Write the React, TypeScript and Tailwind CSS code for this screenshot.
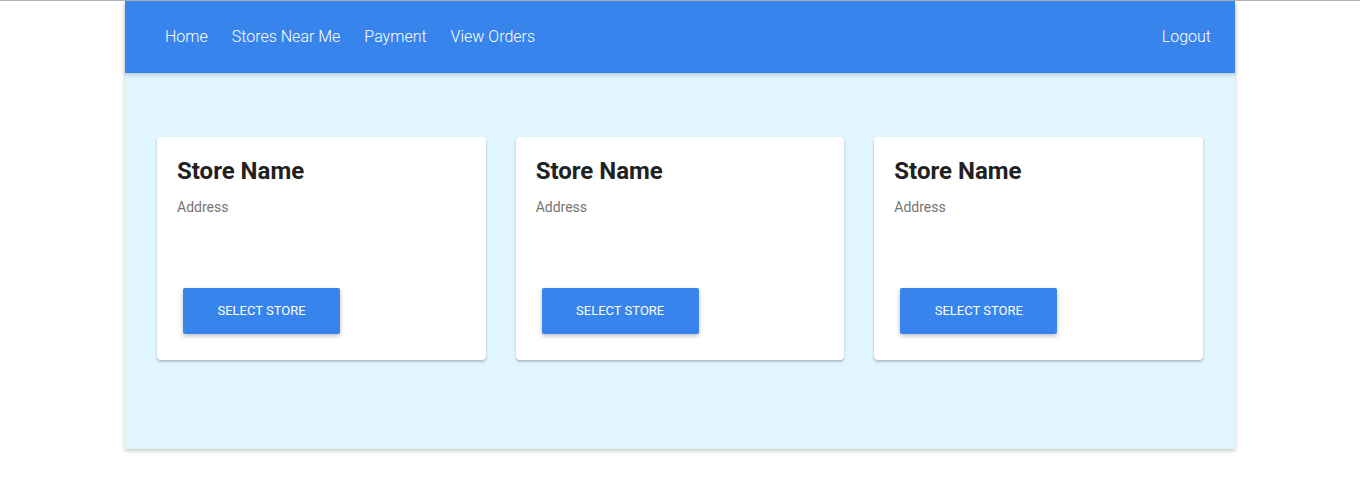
const links = ["Home", "Stores Near Me", "Payment", "View Orders"];

function StoreCard() {
  return (
    <div className="bg-white rounded-[4px] p-5 shadow-[0_2px_3px_rgba(0,0,0,0.16),0_1px_2px_rgba(0,0,0,0.12)]">
      <h2 className="text-[24px] leading-7 font-bold text-[#212121]">Store Name</h2>
      <p className="mt-3 text-[14px] leading-5 text-[#757575]">Address</p>
      <button
        type="button"
        className="mt-[71px] mb-[6px] ml-[6px] h-[46px] w-[157px] rounded-[2px] bg-[#3884ed] text-white text-[13px] font-normal uppercase shadow-[0_2px_4px_rgba(0,0,0,0.25)]"
      >
        Select Store
      </button>
    </div>
  );
}

export default function App() {
  return (
    <div className="min-h-[499px] bg-white border-t border-[#b3b3b3]" style={{ fontFamily: "Roboto, 'Liberation Sans', sans-serif" }}>
      <div className="w-[1110px] mx-auto shadow-[0_2px_4px_rgba(0,0,0,0.22)]">
        <nav className="h-[72px] bg-[#3884ed] flex items-center justify-between pl-7 pr-3 shadow-[0_2px_4px_rgba(0,0,0,0.18)] relative">
          <div className="flex">
            {links.map(l => (
              <a key={l} href="#" className="px-3 text-[16px] font-light text-white">
                {l}
              </a>
            ))}
          </div>
          <a href="#" className="px-3 text-[16px] font-light text-white">
            Logout
          </a>
        </nav>
        <main className="bg-[#e1f5fe] pt-16 px-8 pb-[89px] grid grid-cols-3 gap-[30px]">
          <StoreCard />
          <StoreCard />
          <StoreCard />
        </main>
      </div>
    </div>
  );
}
